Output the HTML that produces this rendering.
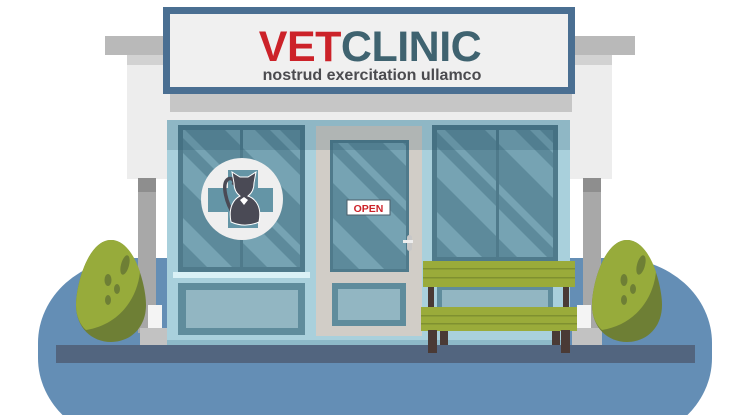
<!DOCTYPE html>
<html><head><meta charset="utf-8"><style>
html,body{margin:0;padding:0;background:#fff;width:750px;height:415px;overflow:hidden}
svg{display:block}
</style></head><body>
<svg width="750" height="415" viewBox="0 0 750 415" xmlns="http://www.w3.org/2000/svg" style="overflow:hidden">
<defs>
<clipPath id="wl"><rect x="183" y="130" width="117" height="137"/></clipPath>
<clipPath id="wr"><rect x="437" y="130" width="116" height="127"/></clipPath>
<clipPath id="wd"><rect x="333" y="143" width="73" height="126"/></clipPath>
<clipPath id="gc"><rect x="0" y="0" width="750" height="415"/></clipPath>
</defs>
<g clip-path="url(#gc)">
<rect x="38" y="258" width="674" height="185" rx="95" ry="85" fill="#648eb5"/>
</g>
<!-- roof -->
<rect x="105" y="36" width="530" height="19" fill="#b9b9b9"/>
<rect x="127" y="55" width="485" height="124" fill="#ededed"/>
<rect x="127" y="55" width="485" height="10" fill="#d2d2d2"/>
<rect x="170" y="94" width="402" height="18" fill="#c6c6c6"/>
<!-- pillars -->
<rect x="138" y="178" width="18" height="155" fill="#a8a8a8"/>
<rect x="138" y="178" width="18" height="14" fill="#8e8e8e"/>
<rect x="583" y="178" width="18" height="155" fill="#a8a8a8"/>
<rect x="583" y="178" width="18" height="14" fill="#8e8e8e"/>
<rect x="148" y="305" width="14" height="25" fill="#f4f4f4"/>
<rect x="577" y="305" width="14" height="25" fill="#f4f4f4"/>
<rect x="140" y="328" width="30" height="18" fill="#c2c2c2"/>
<rect x="572" y="328" width="30" height="18" fill="#c2c2c2"/>
<!-- facade -->
<rect x="167" y="120" width="403" height="226" fill="#a9d0dc"/>
<rect x="167" y="340" width="403" height="6" fill="#8db9c8"/>
<!-- left window -->
<rect x="178" y="125" width="127" height="147" fill="#4f7a8b"/>
<rect x="183" y="130" width="117" height="137" fill="#5d8a9b"/>
<g clip-path="url(#wl)" fill="#76a3b3">
<polygon points="40,100 65,100 265,300 240,300"/>
<polygon points="100,100 130,100 330,300 300,300"/>
<polygon points="145,100 155,100 355,300 345,300"/>
<polygon points="195,100 225,100 425,300 395,300"/>
<polygon points="240,100 250,100 450,300 440,300"/>
</g>
<rect x="240" y="130" width="3" height="137" fill="#4f7a8b"/>
<rect x="173" y="272" width="137" height="6" fill="#daf1f6"/>
<rect x="178" y="283" width="127" height="52" fill="#5f8c9c"/>
<rect x="186" y="290" width="112" height="38" fill="#92b6c2"/>
<!-- right window -->
<rect x="432" y="125" width="126" height="137" fill="#4f7a8b"/>
<rect x="437" y="130" width="116" height="127" fill="#5d8a9b"/>
<g clip-path="url(#wr)" fill="#76a3b3">
<polygon points="300,100 325,100 525,300 500,300"/>
<polygon points="360,100 390,100 590,300 560,300"/>
<polygon points="405,100 415,100 615,300 605,300"/>
<polygon points="455,100 485,100 685,300 655,300"/>
<polygon points="500,100 510,100 710,300 700,300"/>
</g>
<rect x="496" y="130" width="3" height="127" fill="#4f7a8b"/>
<rect x="437" y="283" width="116" height="46" fill="#5f8c9c"/>
<rect x="442" y="290" width="106" height="32" fill="#92b6c2"/>
<!-- door -->
<rect x="316" y="126" width="106" height="210" fill="#d1cdc7"/>
<rect x="330" y="140" width="79" height="132" fill="#4f7a8b"/>
<rect x="333" y="143" width="73" height="126" fill="#5d8a9b"/>
<g clip-path="url(#wd)" fill="#76a3b3">
<polygon points="190,100 215,100 415,300 390,300"/>
<polygon points="250,100 280,100 480,300 450,300"/>
<polygon points="295,100 305,100 505,300 495,300"/>
<polygon points="340,100 360,100 560,300 540,300"/>
</g>
<rect x="332" y="283" width="74" height="43" fill="#5f8c9c"/>
<rect x="338" y="289" width="62" height="31" fill="#92b6c2"/>
<rect x="167" y="120" width="403" height="30" fill="#1e4a5c" opacity="0.18"/>
<rect x="347" y="200" width="43" height="15" fill="#fff" stroke="#4a5d6a" stroke-width="1"/>
<text x="368.5" y="212" text-anchor="middle" font-family="Liberation Sans, sans-serif" font-weight="bold" font-size="10.5" fill="#cc2229">OPEN</text>
<rect x="407" y="235" width="5" height="16" rx="2.5" fill="#c8c8c8"/>
<rect x="403" y="240" width="10" height="3" fill="#eee"/>
<!-- logo -->
<circle cx="242" cy="199" r="41" fill="#efefef"/>
<rect x="228" y="170" width="30" height="58" fill="#6495a6"/>
<rect x="208" y="188" width="65" height="24" fill="#6495a6"/>
<path d="M234 215 C226 203 222 185 227 180 C231 176 236 181 233 185" fill="none" stroke="#4a4a55" stroke-width="3.5"/>
<path d="M231 222 C228 207 234 199 240 196 C236 193 234 189 234 183 L232 172 L240 177 L248 177 L256 172 L254 183 C254 189 252 193 248 196 C256 199 262 207 259 222 C250 226 240 226 231 222Z" fill="#4a4a55" stroke="#fff" stroke-width="1"/>
<path d="M240 200 L244 197 L248 200 L244 205Z" fill="#fff"/>
<!-- bench -->
<rect x="428" y="285" width="6" height="30" fill="#4a3a35"/>
<rect x="563" y="285" width="6" height="30" fill="#4a3a35"/>
<rect x="440" y="325" width="8" height="22" fill="#4a3a35"/>
<rect x="552" y="325" width="8" height="22" fill="#4a3a35"/>
<rect x="423" y="261" width="152" height="26" fill="#9aab3a"/>
<rect x="423" y="268" width="152" height="1.5" fill="#7f9030"/>
<rect x="423" y="277" width="152" height="1.5" fill="#7f9030"/>
<rect x="421" y="307" width="156" height="24" fill="#9aab3a"/>
<rect x="421" y="315" width="156" height="1.5" fill="#7f9030"/>
<rect x="421" y="323" width="156" height="1.5" fill="#7f9030"/>
<rect x="428" y="330" width="9" height="24" fill="#4a3a35"/>
<rect x="561" y="330" width="9" height="24" fill="#4a3a35"/>
<!-- sidewalk -->
<rect x="56" y="345" width="639" height="18" fill="#52657f"/>
<rect x="428" y="345" width="9" height="8" fill="#4a3a35"/>
<rect x="561" y="345" width="9" height="8" fill="#4a3a35"/>
<!-- bushes -->
<g>
<path d="M111 240 C88 240 76 285 76 305 C76 328 92 342 111 342 C130 342 146 328 146 305 C146 285 134 240 111 240Z" fill="#6e7f35"/>
<path d="M111 240 C88 240 76 285 76 305 C76 316 80 325 86 330 C118 325 137 300 140 272 C134 254 124 240 111 240Z" fill="#97ab3b"/>
<ellipse cx="125" cy="265" rx="4" ry="10" fill="#6e7f35" transform="rotate(15 125 265)"/>
<ellipse cx="108" cy="280" rx="3.5" ry="6" fill="#6e7f35"/>
<ellipse cx="117" cy="289" rx="3" ry="5" fill="#6e7f35"/>
<ellipse cx="108" cy="300" rx="3" ry="5" fill="#6e7f35"/>
</g>
<g transform="translate(516,0)">
<path d="M111 240 C88 240 76 285 76 305 C76 328 92 342 111 342 C130 342 146 328 146 305 C146 285 134 240 111 240Z" fill="#6e7f35"/>
<path d="M111 240 C88 240 76 285 76 305 C76 316 80 325 86 330 C118 325 137 300 140 272 C134 254 124 240 111 240Z" fill="#97ab3b"/>
<ellipse cx="125" cy="265" rx="4" ry="10" fill="#6e7f35" transform="rotate(15 125 265)"/>
<ellipse cx="108" cy="280" rx="3.5" ry="6" fill="#6e7f35"/>
<ellipse cx="117" cy="289" rx="3" ry="5" fill="#6e7f35"/>
<ellipse cx="108" cy="300" rx="3" ry="5" fill="#6e7f35"/>
</g>
<!-- sign -->
<rect x="163" y="7" width="412" height="87" fill="#4a6f92"/>
<rect x="170" y="14" width="398" height="73" fill="#f0f0f0"/>
<text x="370" y="61" text-anchor="middle" font-family="Liberation Sans, sans-serif" font-weight="bold" font-size="43" letter-spacing="-0.5"><tspan fill="#cc2229">VET</tspan><tspan fill="#3f6370">CLINIC</tspan></text>
<text x="372" y="80" text-anchor="middle" font-family="Liberation Sans, sans-serif" font-weight="bold" font-size="16" fill="#4b4b4f">nostrud exercitation ullamco</text>
</svg>
</body></html>
